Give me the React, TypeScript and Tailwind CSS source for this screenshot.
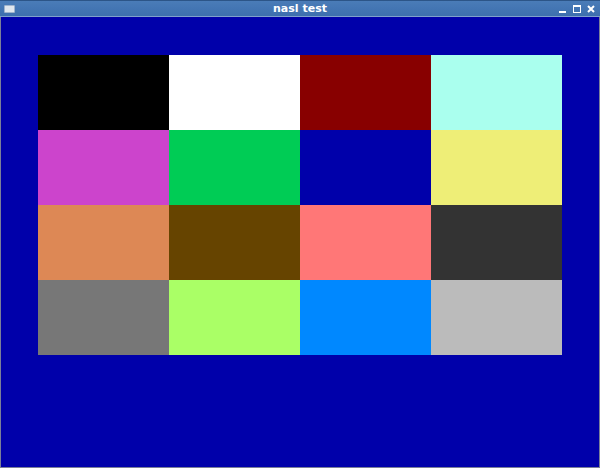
const colors = [
  '#000000', '#ffffff', '#880000', '#aaffee',
  '#cc44cc', '#00cc55', '#0000aa', '#eeee77',
  '#dd8855', '#664400', '#ff7777', '#333333',
  '#777777', '#aaff66', '#0088ff', '#bbbbbb',
]

export default function App() {
  return (
    <div className="w-[600px] h-[468px] flex flex-col bg-[#0000aa]" style={{ fontFamily: '"DejaVu Sans", sans-serif' }}>
      {/* title bar */}
      <div className="h-[17px] flex items-center bg-gradient-to-b from-[#4a7cb8] to-[#3d6fae] border-t border-[#2c5588] border-b border-b-[#7fa0cc] relative">
        <div className="ml-[4px] w-[11px] h-[8px] bg-[#dfe6ee] border border-[#9fb3cc] rounded-[1px]" />
        <div className="absolute inset-0 flex items-center justify-center text-white text-[11px] font-bold leading-none">nasl test</div>
        <div className="ml-auto mr-[5px] flex items-center gap-[6px] text-white">
          <svg width="8" height="8" viewBox="0 0 8 8"><rect x="0" y="6" width="7" height="2" fill="white" /></svg>
          <svg width="8" height="8" viewBox="0 0 8 8"><rect x="0.5" y="0.5" width="7" height="7" fill="none" stroke="white" /><rect x="0" y="0" width="8" height="2" fill="white" /></svg>
          <svg width="8" height="8" viewBox="0 0 8 8"><path d="M1 1 L7 7 M7 1 L1 7" stroke="white" strokeWidth="2" /></svg>
        </div>
      </div>
      {/* content */}
      <div className="flex-1 bg-[#0000aa] border-x border-b border-[#7a7f99] pl-[37px] pt-[38px]">
        <div className="grid grid-cols-[repeat(4,131px)] grid-rows-[repeat(4,75px)]">
          {colors.map((c, i) => (
            <div key={i} style={{ backgroundColor: c }} />
          ))}
        </div>
      </div>
    </div>
  )
}
